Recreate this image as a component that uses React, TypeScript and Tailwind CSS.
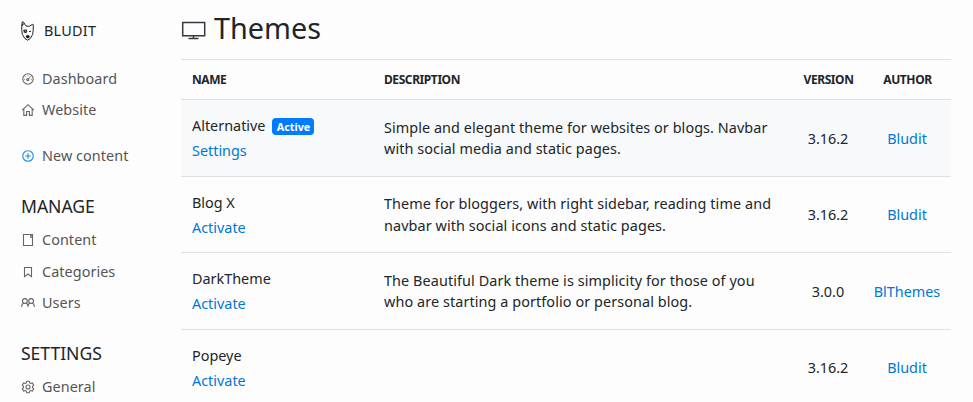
import type { ReactNode } from "react";

function Icon({ children, className = "text-[#666]" }: { children: ReactNode; className?: string }) {
  return (
    <svg viewBox="0 0 14 14" fill="none" stroke="currentColor" strokeWidth="1.1" className={`h-3.5 w-3.5 shrink-0 ${className}`}>
      {children}
    </svg>
  );
}

function DogLogo() {
  return (
    <svg viewBox="0 0 14 20" className="h-5 w-3.5 shrink-0" fill="none" stroke="#222" strokeWidth="1" strokeLinejoin="round">
      <path d="M.8 9.5.7 4.5 1.3.8 2.6 1.2 4.6 4.6 6 5.2H8.4L11.8 3.2 12.3 4 12.2 9.5 11.6 13.5 9.3 17.5 6.6 19.2 3.8 17.5 1.4 13.5Z" />
      <path d="M1.2 4.8 2.4 2.5" strokeWidth="1.2" />
      <path d="M2.2 9 5.4 8.2 6.3 10.4 5 12.2 2.9 11.6Z" fill="#222" stroke="none" />
      <circle cx="4.5" cy="10" r="0.6" fill="#ddd" stroke="none" />
      <path d="M8 10.4h2" />
      <path d="M5 15 6.7 14.2l1.8.8-.8 1.9H5.8Z" fill="#111" stroke="#111" strokeWidth="0.5" />
    </svg>
  );
}

const icons = {
  dashboard: (
    <Icon>
      <circle cx="7" cy="7" r="5.2" />
      <circle cx="6.7" cy="7.6" r="1" />
      <path d="m7.4 6.9 2.5-2.7M3.2 7.3h1M9.8 7.3h1M7 3.2v.9M4.2 4.4l.7.7" strokeWidth="0.9" />
    </Icon>
  ),
  home: (
    <Icon>
      <path d="M1.2 7.2 7 1.7l5.8 5.5M2.8 6v6.4h2.8V8.5h2.8v3.9h2.8V6" />
    </Icon>
  ),
  plus: (
    <Icon className="text-[#1c8be0]">
      <circle cx="7" cy="7" r="5.3" />
      <path d="M7 4.2v5.6M4.2 7h5.6" />
    </Icon>
  ),
  content: (
    <Icon>
      <path d="M2.5 1.5h9v11h-9z" />
      <path d="M9 2h2.5v3H9z" fill="currentColor" stroke="none" opacity="0.75" />
    </Icon>
  ),
  bookmark: (
    <Icon>
      <path d="M3.5 2.5h7v9.2L7 9l-3.5 2.7z" />
    </Icon>
  ),
  users: (
    <Icon>
      <circle cx="3.9" cy="5" r="2.4" />
      <circle cx="10.1" cy="5" r="2.4" />
      <path d="M.6 11c0-2 .9-3.4 2.1-3.9M5.2 7.1C6.3 7.7 7 8.8 7 10.8c0-2 .7-3.1 1.8-3.7M11.3 7.1c1.2.5 2.1 1.9 2.1 3.9" />
    </Icon>
  ),
  gear: (
    <Icon>
      <path d="M5.7 1.2h2.6l.4 1.7 1 .6 1.7-.5 1.3 2.2-1.2 1.3v1l1.2 1.3-1.3 2.2-1.7-.5-1 .6-.4 1.7H5.7l-.4-1.7-1-.6-1.7.5-1.3-2.2 1.2-1.3v-1L1.3 5.2l1.3-2.2 1.7.5 1-.6z" />
      <circle cx="7" cy="7" r="2" />
    </Icon>
  ),
};

function NavItem({ icon, label, className }: { icon: ReactNode; label: string; className: string }) {
  return (
    <a className={`flex items-center gap-[7px] text-[14.4px] tracking-[0.06px] text-[#555] ${className}`}>
      {icon}
      <span>{label}</span>
    </a>
  );
}

const cols = "grid grid-cols-[192px_420px_71px_87px]";

const themes = [
  { name: "Alternative", action: "Settings", lines: ["Simple and elegant theme for websites or blogs. Navbar", "with social media and static pages."], version: "3.16.2", author: "Bludit", active: true, size: "h-[77px] bg-[#f8f9fb]", namePad: "", descPad: "pb-px leading-[21px] tracking-[0.07px]", metaPad: "pt-0.5" },
  { name: "Blog X", action: "Activate", lines: ["Theme for bloggers, with right sidebar, reading time and", "navbar with social icons and static pages."], version: "3.16.2", author: "Bludit", active: false, size: "h-[76px]", namePad: "pt-px", descPad: "tracking-[0.09px]", metaPad: "" },
  { name: "DarkTheme", action: "Activate", lines: ["The Beautiful Dark theme is simplicity for those of you", "who are starting a portfolio or personal blog."], version: "3.0.0", author: "BlThemes", active: false, size: "h-[77px]", namePad: "", descPad: "pb-px leading-[21px] tracking-[0.09px]", metaPad: "pt-0.5" },
  { name: "Popeye", action: "Activate", lines: [], version: "3.16.2", author: "Bludit", active: false, size: "h-[76px]", namePad: "pt-px", descPad: "", metaPad: "" },
];

export default function App() {
  return (
    <div className="flex h-[402px] w-[973px] overflow-hidden bg-[#fdfdfd] font-['Noto_Sans',sans-serif] text-[14.4px] leading-[21.6px] text-[#212529]">
      <aside className="w-[181px] shrink-0 pl-[21px]">
        <div className="mt-5 flex h-[21px] items-center gap-[9px]">
          <DogLogo />
          <span className="tracking-[0.25px]">BLUDIT</span>
        </div>
        <nav>
          <NavItem icon={icons.dashboard} label="Dashboard" className="mt-[22px] h-8" />
          <NavItem icon={icons.home} label="Website" className="h-[30px]" />
          <NavItem icon={icons.plus} label="New content" className="mt-[15px] h-8" />
          <h4 className="mt-[24px] h-[21px] text-[17.6px] tracking-[-0.05px]">MANAGE</h4>
          <NavItem icon={icons.content} label="Content" className="mt-[7px] h-8" />
          <NavItem icon={icons.bookmark} label="Categories" className="h-8" />
          <NavItem icon={icons.users} label="Users" className="h-[30px]" />
          <h4 className="mt-[25px] h-[21px] text-[17.6px] tracking-[-0.05px]">SETTINGS</h4>
          <NavItem icon={icons.gear} label="General" className="mt-[7px] h-8" />
        </nav>
      </aside>
      <main className="w-[770px] shrink-0">
        <h2 className="flex h-[59px] items-center gap-2 pb-[3px] text-[28.8px]">
          <svg viewBox="0 0 25 20" className="mt-[3px] h-5 w-[25px]" fill="none" stroke="#343a40" strokeWidth="1.5">
            <path d="M1.7 2.5h22v13.3h-22z" />
            <path d="M12.5 16v2.5M7.5 18.5h10" />
          </svg>
          <span>Themes</span>
        </h2>
        <div className={`${cols} h-10 items-center border-t border-[#dee2e6] text-[12px] font-bold tracking-[-0.42px]`}>
          <span className="pl-[11px]">NAME</span>
          <span className="pl-[11px]">DESCRIPTION</span>
          <span className="text-center">VERSION</span>
          <span className="text-center">AUTHOR</span>
        </div>
        {themes.map((t) => (
          <div key={t.name} className={`${cols} ${t.size} items-center border-t border-[#dee2e6]`}>
            <div className={`pl-[11px] ${t.namePad}`}>
              <div className="flex h-[25px] items-center gap-[7px]">
                <span>{t.name}</span>
                {t.active && <span className="mt-0.5 flex h-[17px] w-[42px] items-center justify-center rounded bg-[#007bff] text-[10.8px] font-bold text-white">Active</span>}
              </div>
              <div className="flex h-[25px] items-center text-[#0078d4]">{t.action}</div>
            </div>
            <div className={`pl-[11px] ${t.descPad}`}>
              {t.lines.map((l) => <p key={l} className="whitespace-nowrap">{l}</p>)}
            </div>
            <span className={`pr-px text-center ${t.metaPad}`}>{t.version}</span>
            <span className={`pr-px text-center text-[#0078d4] ${t.metaPad}`}>{t.author}</span>
          </div>
        ))}
      </main>
    </div>
  );
}
